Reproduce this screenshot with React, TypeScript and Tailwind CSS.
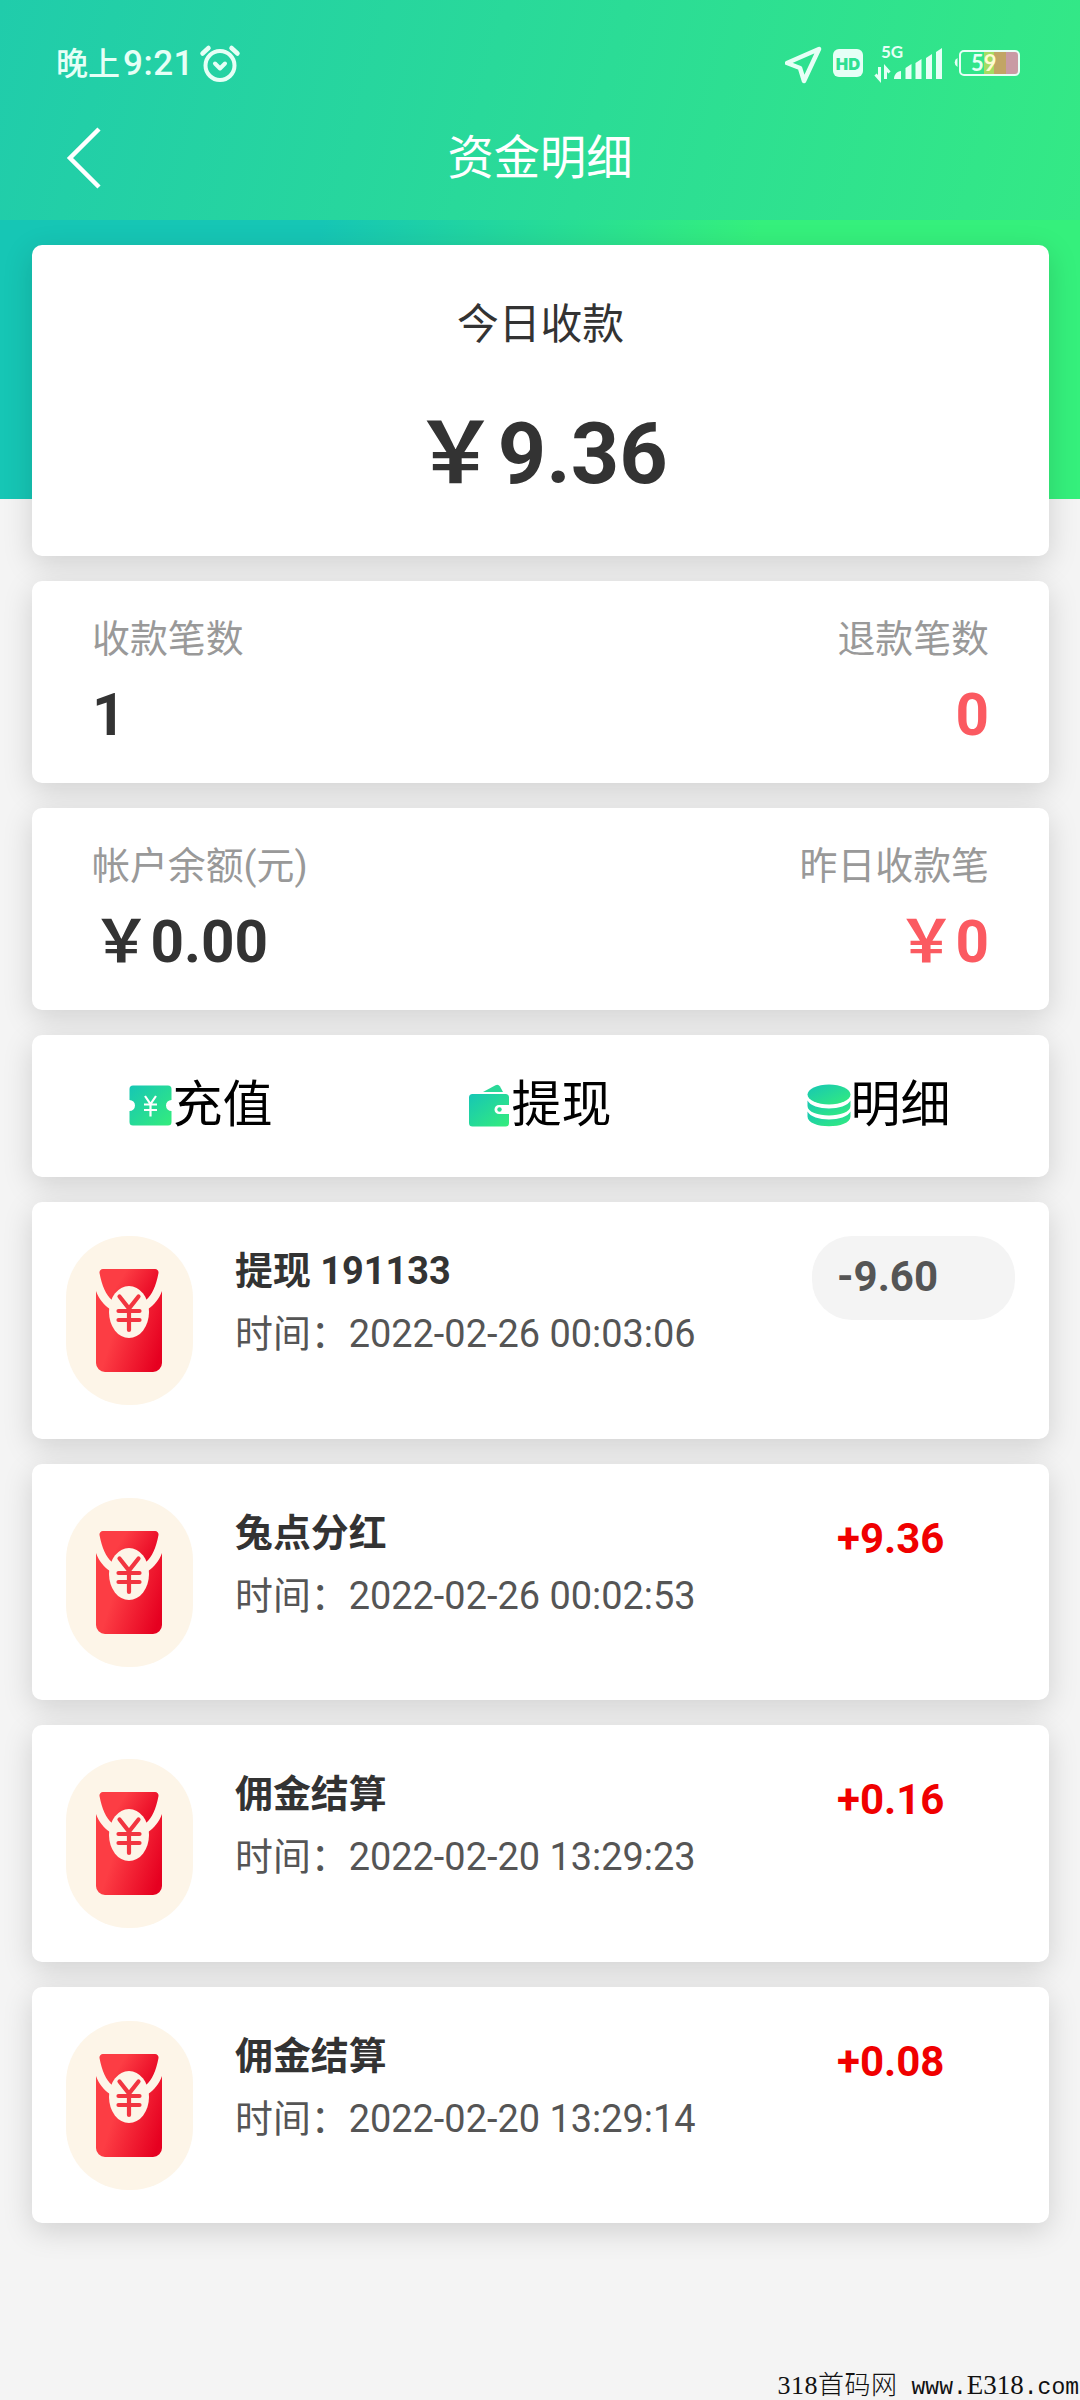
import React from "react";

const records = [
    { title: "提现 191133", time: "2022-02-26 00:03:06", amount: "-9.60", out: true },
    { title: "兔点分红", time: "2022-02-26 00:02:53", amount: "+9.36", out: false },
    { title: "佣金结算", time: "2022-02-20 13:29:23", amount: "+0.16", out: false },
    { title: "佣金结算", time: "2022-02-20 13:29:14", amount: "+0.08", out: false },
];

const card = "bg-white rounded-[10px] shadow-[0_8px_30px_rgba(0,0,0,0.15)]";

function StatusBar() {
    return (
        <div className="flex justify-between h-[124px] pl-[56px] pr-[60px] text-[#e6fff6]">
            <div className="flex items-center h-[126px]">
                <span className="text-[32px] font-medium leading-none">
                    晚上<span className="text-[35px] ml-[3px] tracking-[0.5px]">9:21</span>
                </span>
                <svg className="ml-[5px] mt-[2px]" width="42" height="40" viewBox="0 0 42 40" fill="none" stroke="currentColor" strokeWidth="4" strokeLinecap="round">
                    <circle cx="21" cy="21.500" r="14.500" />
                    <path d="M16 19.500l5 5 5-5" strokeLinejoin="round" />
                    <path d="M3.500 9.500l6-5.500M38.500 9.500l-6-5.500" strokeWidth="4.500" />
                </svg>
            </div>
            <div className="flex items-center h-[126px]">
                <svg width="235" height="44" viewBox="785 41 235 44">
                    <path d="M787 63L819 49L804 81L800 68Z" fill="none" stroke="currentColor" strokeWidth="4.500" strokeLinejoin="round" />
                    <rect x="833" y="49" width="30" height="28" rx="6" fill="currentColor" />
                    <text x="848" y="69.500" fill="#2fdf92" fontSize="16.500" fontWeight="900" textAnchor="middle" className="font-[Inter]">HD</text>
                    <text x="881" y="58" fill="currentColor" fontSize="17" fontWeight="700" className="font-[Lato]">5G</text>
                    <path d="M879.500 67v12l-4-4.500M885.500 79V68l4 4.500" fill="none" stroke="currentColor" strokeWidth="3" />
                    <path d="M894 79c0-4 3-8 7-8v8zM905.500 68l6-4v15h-6zM915.500 63l6-4v20h-6zM926 58l6-4v25h-6zM936 52l6-4v31h-6z" fill="currentColor" />
                    <rect x="984" y="51" width="12" height="23" fill="#a5dc62" />
                    <rect x="994" y="51" width="12" height="23" fill="#c2a565" />
                    <rect x="1006" y="51" width="12" height="23" fill="#c99aa4" />
                    <rect x="960" y="51" width="59" height="24" rx="4" fill="none" stroke="currentColor" strokeWidth="2" />
                    <path d="M957.500 58a5 5 0 0 0 0 9z" fill="currentColor" />
                    <text x="971" y="71" fill="currentColor" fontSize="22" fontWeight="700" className="font-[Lato]">
                        5<tspan fill="#fffbd0">9</tspan>
                    </text>
                </svg>
            </div>
        </div>
    );
}

function GreenGradient({ id }: { id: string }) {
    return (
        <defs>
            <linearGradient id={id} x1="0" y1="0" x2="1" y2="1">
                <stop offset="0" stopColor="#16c6b5" />
                <stop offset="1" stopColor="#34ed7c" />
            </linearGradient>
        </defs>
    );
}

function CouponIcon() {
    return (
        <svg className="shrink-0" width="44" height="45" viewBox="0 0 44 45">
            <GreenGradient id="coupon" />
            <path d="M4 2.500h35a3.500 3.500 0 0 1 3.500 3.500v11a5.500 5.500 0 0 0 0 11v11a3.500 3.500 0 0 1-3.500 3.500H4a3.500 3.500 0 0 1-3.500-3.500V28a5.500 5.500 0 0 0 0-11V6A3.500 3.500 0 0 1 4 2.500z" fill="url(#coupon)" />
            <path d="M16 13l5.500 8 5.500-8M15 21.500h13M15 27h13M21.500 21v12.500" fill="none" stroke="#fff" strokeWidth="2.200" />
        </svg>
    );
}

function WalletIcon() {
    return (
        <svg className="shrink-0" width="44" height="45" viewBox="0 0 44 45">
            <GreenGradient id="wallet" />
            <path d="M15 9L27.500 2.200a3.500 3.500 0 0 1 4.500 1.300L35 9z" fill="#29d898" />
            <path d="M4.500 11h33a3.500 3.500 0 0 1 3.500 3.500V22H31a4.500 4.500 0 0 0 0 9h10v9a3.500 3.500 0 0 1-3.500 3.500h-33A3.500 3.500 0 0 1 1 40V14.500A3.500 3.500 0 0 1 4.500 11z" fill="url(#wallet)" />
            <circle cx="31.500" cy="26.500" r="2.200" fill="#2bdc92" />
        </svg>
    );
}

function CoinsIcon() {
    return (
        <svg className="shrink-0" width="44" height="45" viewBox="0 0 44 45">
            <GreenGradient id="coins" />
            <ellipse cx="22" cy="11.500" rx="21.500" ry="10" fill="url(#coins)" />
            <path d="M.5 17.500c5 10.500 38 10.500 43 0v5.500c0 12.500-43 12.500-43 0z" fill="url(#coins)" />
            <path d="M.5 28.500c5 10.500 38 10.500 43 0v5c0 13-43 13-43 0z" fill="url(#coins)" />
        </svg>
    );
}

function RedPacket() {
    return (
        <div className="flex justify-center items-center w-[127px] h-[169px] pr-[1px] rounded-[62px] bg-[#fdf5e8]">
            <svg width="66" height="103" viewBox="0 0 66 103">
                <defs>
                    <linearGradient id="packet" x1="0" y1="0.300" x2="1" y2="0.700">
                        <stop offset="0.300" stopColor="#fc3d44" />
                        <stop offset="1" stopColor="#e60020" />
                    </linearGradient>
                </defs>
                <path d="M7 0h52a3.500 3.500 0 0 1 3.500 4C60 17 56 26 50 31L33 38 16 31C10 26 6 17 3.500 4A3.500 3.500 0 0 1 7 0z" fill="url(#packet)" />
                <path d="M0 22c3 8 8 14 14 18h38c6-4 11-10 14-18v72a9 9 0 0 1-9 9H9a9 9 0 0 1-9-9z" fill="url(#packet)" />
                <ellipse cx="33" cy="43" rx="20" ry="26" fill="#fdf5e8" />
                <path d="M23.500 27.500l9.500 12 9.500-12M22.500 42h21M22.500 51h21M33 40v21" fill="none" stroke="#f23540" strokeWidth="4.200" strokeLinecap="round" />
            </svg>
        </div>
    );
}

export default function App() {
    return (
        <div className="w-[1080px] h-[2400px] overflow-hidden bg-[#f4f4f4] font-[Roboto,'Noto_Sans_CJK_SC',sans-serif] text-[#333]">
            <header className="h-[220px] bg-[linear-gradient(105deg,#20ccab_0%,#34e985_100%)]">
                <StatusBar />
                <div className="flex items-center justify-between h-[68px] px-[64px] text-white">
                    <svg width="40" height="62" viewBox="0 0 40 62" fill="none" stroke="currentColor" strokeWidth="4.500">
                        <path d="M35 2L6 31l29 29" />
                    </svg>
                    <h1 className="text-[46.300px] leading-[66px]">资金明细</h1>
                    <span className="w-[40px]" />
                </div>
            </header>
            <div className="h-[279px] px-[32px] pt-[25px] bg-[linear-gradient(105deg,#16c6b5_28%,#35f07c_66%)]">
                <main className="flex flex-col gap-[25px] w-[1017px]">
                    <section className={`${card} flex flex-col items-center h-[311px] pt-[50px]`}>
                        <p className="text-[41.800px] leading-[60px]">今日收款</p>
                        <p className="mt-[50px] text-[84.500px] leading-[100px] font-bold">￥9.36</p>
                    </section>
                    <section className={`${card} flex justify-between h-[202px] px-[60px] pt-[32px]`}>
                        <div>
                            <p className="text-[37.900px] leading-[52px] text-[#999]">收款笔数</p>
                            <p className="mt-[15px] text-[58.500px] leading-[70px] font-bold">1</p>
                        </div>
                        <div className="text-right">
                            <p className="text-[37.900px] leading-[52px] text-[#999]">退款笔数</p>
                            <p className="mt-[15px] text-[58.500px] leading-[70px] font-bold text-[#fb5a61]">0</p>
                        </div>
                    </section>
                    <section className={`${card} flex justify-between h-[202px] px-[60px] pt-[32px]`}>
                        <div>
                            <p className="text-[37.900px] leading-[52px] text-[#999]">帐户余额(元)</p>
                            <p className="mt-[15px] text-[58.500px] leading-[70px] font-bold">￥0.00</p>
                        </div>
                        <div className="text-right">
                            <p className="text-[37.900px] leading-[52px] text-[#999]">昨日收款笔</p>
                            <p className="mt-[15px] text-[58.500px] leading-[70px] font-bold text-[#fb5a61]">￥0</p>
                        </div>
                    </section>
                    <section className={`${card} grid grid-cols-3 h-[142px] pt-[34px] text-[50px] leading-[70px] text-black`}>
                        <div className="flex justify-center items-center h-[72px] pr-[2px]">
                            <CouponIcon />
                            充值
                        </div>
                        <div className="flex justify-center items-center h-[72px] pr-[2px]">
                            <WalletIcon />
                            提现
                        </div>
                        <div className="flex justify-center items-center h-[72px] pr-[2px]">
                            <CoinsIcon />
                            明细
                        </div>
                    </section>
                    {records.map((r) => (
                        <section key={r.time} className={`${card} flex h-[236.500px] pl-[34px] pr-[34px] pt-[34px]`}>
                            <RedPacket />
                            <div className="flex-1 pl-[42px]">
                                <p className="mt-[6px] text-[37.900px] leading-[58px] font-bold">{r.title}</p>
                                <p className="mt-[5px] text-[37.900px] leading-[58px] text-[#555]">时间：{r.time}</p>
                            </div>
                            <div
                                className={
                                    r.out
                                        ? "w-[203px] h-[84px] pl-[25px] rounded-[40px] bg-[#f4f4f4] text-[42px] leading-[81px] font-bold text-[#555]"
                                        : "w-[203px] h-[84px] pl-[25px] text-[42px] leading-[81px] font-bold text-[#f00000]"
                                }
                            >
                                {r.amount}
                            </div>
                        </section>
                    ))}
                </main>
                <footer className="flex justify-end items-baseline gap-[14px] w-[1047px] mt-[150px] font-['Liberation_Serif','Noto_Sans_CJK_SC',serif] text-[26px] leading-[24px] text-[#111] whitespace-nowrap">
                    <span className="font-light tracking-[0.500px]">318首码网</span>
                    <span className="font-['Liberation_Mono',monospace] text-[23px]">
                        www.<span className="font-['Liberation_Serif',serif] text-[27px]">E318</span>.com
                    </span>
                </footer>
            </div>
        </div>
    );
}
